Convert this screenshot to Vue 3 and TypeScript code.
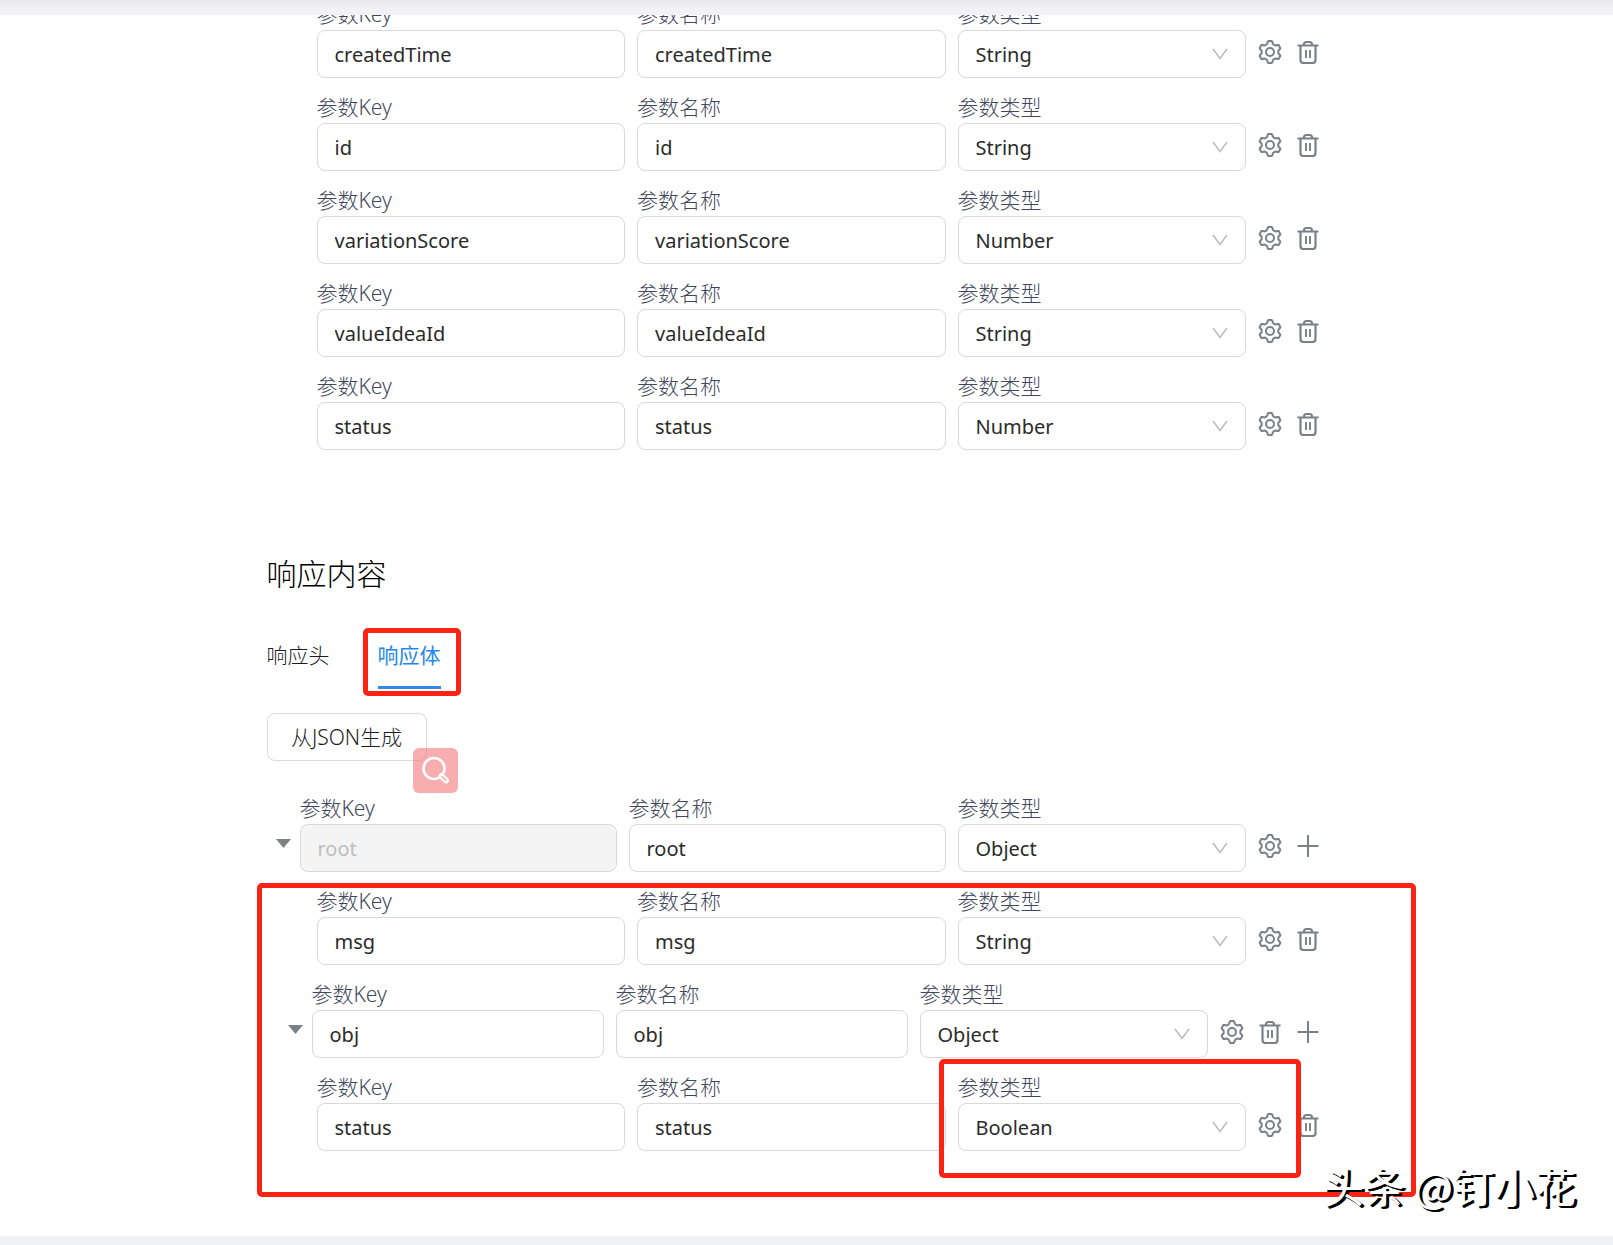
<script setup lang="ts">
import { reactive } from 'vue'

type Level = 'root' | 'branch' | 'leaf'
type Action = 'setting' | 'remove' | 'add'

interface Param {
  id: string
  key: string
  name: string
  type: string
  level: Level
  actions: Action[]
  disabled?: boolean
  marked?: boolean
}

const types = ['String', 'Number', 'Boolean', 'Object', 'Array']

function leaf(id: string, key: string, type: string, marked = false): Param {
  return { id, key, name: key, type, level: 'leaf', actions: ['setting', 'remove'], marked }
}

const groups = reactive({
  request: [
    leaf('req-created', 'createdTime', 'String'),
    leaf('req-id', 'id', 'String'),
    leaf('req-score', 'variationScore', 'Number'),
    leaf('req-idea', 'valueIdeaId', 'String'),
    leaf('req-status', 'status', 'Number'),
  ] as Param[],
  root: [
    { id: 'res-root', key: 'root', name: 'root', type: 'Object', level: 'root', actions: ['setting', 'add'], disabled: true },
  ] as Param[],
  children: [
    leaf('res-msg', 'msg', 'String'),
    { id: 'res-obj', key: 'obj', name: 'obj', type: 'Object', level: 'branch', actions: ['setting', 'remove', 'add'] },
    leaf('res-status', 'status', 'Boolean', true),
  ] as Param[],
})

const blocks: { id: 'request' | 'root' | 'children' }[] = [{ id: 'request' }, { id: 'root' }, { id: 'children' }]

const actionLabels: Record<Action, string> = { setting: '设置', remove: '删除', add: '添加' }

// Six-toothed cog outline, centred in a 24 unit box.
function cogPath(): string {
  const at = (r: number, deg: number) => {
    const a = (deg * Math.PI) / 180
    return `${(12 + r * Math.cos(a)).toFixed(2)} ${(12 + r * Math.sin(a)).toFixed(2)}`
  }
  let d = ''
  for (let k = 0; k < 6; k++) {
    const c = 30 + 60 * k
    d += `${k ? 'L' : 'M'}${at(8.6, c - 20)}L${at(10.4, c - 13)}Q${at(11.4, c - 9)} ${at(11, c - 6)}`
    d += `L${at(11, c + 6)}Q${at(11.4, c + 9)} ${at(10.4, c + 13)}L${at(8.6, c + 20)}Q${at(8, c + 30)} ${at(8.6, c + 40)}`
  }
  return d + 'Z'
}
const cog = cogPath()
</script>

<template>
  <div class="page">
    <header class="topbar"></header>
    <main class="sheet">
      <div class="content">
        <template v-for="block in blocks" :key="block.id">
          <section v-if="block.id === 'root'" class="intro">
            <h2 class="title">响应内容</h2>
            <nav class="tabs">
              <button type="button" class="tab">响应头</button>
              <button type="button" class="tab active">响应体<span class="mark mark-tab"></span></button>
            </nav>
            <div class="tools">
              <button type="button" class="generate">从JSON生成</button>
              <button type="button" class="lens" aria-label="搜索">
                <svg width="29" height="29" viewBox="0 0 29 29" fill="none" stroke="#fff">
                  <circle cx="13" cy="12.5" r="10.5" stroke-width="2.6" />
                  <path d="M20.500 20l4.500 4.500" stroke-width="6" stroke-linecap="round" />
                  <path d="M21 20.500l3.600 3.600" stroke="#f6adae" stroke-width="1.6" stroke-linecap="round" />
                </svg>
              </button>
            </div>
          </section>

          <div class="group">
            <div v-for="p in groups[block.id]" :key="p.id" class="row" :class="p.level">
              <button v-if="p.level !== 'leaf'" type="button" class="toggle" aria-label="展开">
                <svg width="15" height="9" viewBox="0 0 15 9"><path d="M0 0h15L7.500 9z" fill="#7d8186" /></svg>
              </button>
              <div class="fields">
                <div class="field">
                  <label :for="p.id + '-key'">参数Key</label>
                  <input :id="p.id + '-key'" v-model="p.key" type="text" :disabled="p.disabled" />
                </div>
                <div class="field">
                  <label :for="p.id + '-name'">参数名称</label>
                  <input :id="p.id + '-name'" v-model="p.name" type="text" />
                </div>
                <div class="field kind">
                  <label :for="p.id + '-type'">参数类型</label>
                  <select :id="p.id + '-type'" v-model="p.type">
                    <option v-for="t in types" :key="t" :value="t">{{ t }}</option>
                  </select>
                  <svg class="chevron" width="16" height="12" viewBox="0 0 16 12" fill="none" stroke="#b9bbbe" stroke-width="1.5">
                    <path d="M1 1l7 9.500L15 1" />
                  </svg>
                </div>
                <div class="actions">
                  <button v-for="a in p.actions" :key="a" type="button" class="action" :aria-label="actionLabels[a]">
                    <svg v-if="a === 'setting'" width="24" height="24" viewBox="0 0 24 24" fill="none" stroke="currentColor" stroke-width="2" stroke-linejoin="round">
                      <path :d="cog" />
                      <circle cx="12" cy="12" r="4" />
                    </svg>
                    <svg v-else-if="a === 'remove'" width="24" height="24" viewBox="0 0 24 24" fill="none" stroke="currentColor" stroke-width="2.2">
                      <path d="M1.500 5.500h21M4.500 5.500V20a3 3 0 0 0 3 3h9a3 3 0 0 0 3-3V5.500M8 5v-.5A2.500 2.500 0 0 1 10.500 2h3A2.500 2.500 0 0 1 16 4.500V5" />
                      <path d="M10 10v8M14 10v8" stroke-width="1.900" />
                    </svg>
                    <svg v-else width="24" height="24" viewBox="0 0 24 24" fill="none" stroke="currentColor" stroke-width="2">
                      <path d="M12 1v22M1.500 12h21" />
                    </svg>
                  </button>
                </div>
              </div>
              <span v-if="p.marked" class="mark mark-type"></span>
            </div>
            <span v-if="block.id === 'children'" class="mark mark-group"></span>
          </div>
        </template>
      </div>
      <p class="watermark">头条 @钉小花</p>
    </main>
  </div>
</template>

<style>
body {
  margin: 0;
  background: #f0f1f5;
}
</style>

<style scoped>
.page {
  font-family: "Noto Sans", "Noto Sans CJK SC", sans-serif;
  font-size: 21px;
  color: #1c1c1c;
  padding-bottom: 9px;
}
.topbar {
  position: fixed;
  z-index: 5;
  top: 0;
  left: 0;
  right: 0;
  height: 15px;
  background: linear-gradient(#e8e8ec, #f1f1f6 8px);
}
.sheet {
  position: relative;
  background: #fff;
  padding-bottom: 70px;
  overflow: hidden;
}
.content {
  max-width: 1080px;
  margin: 0 auto;
}
.group {
  position: relative;
}
.row {
  position: relative;
  display: flex;
  align-items: flex-end;
  padding-right: 27px;
  margin-bottom: 15px;
}
.row.leaf {
  padding-left: 50px;
}
.row.root {
  padding-left: 9px;
}
.row.branch {
  padding-left: 21px;
}
button {
  font: inherit;
  color: inherit;
  background: none;
  border: 0;
  padding: 0;
  cursor: pointer;
}
.toggle {
  width: 24px;
  height: 48px;
  padding-bottom: 10px;
  display: flex;
  align-items: center;
}
.fields {
  flex: 1;
  min-width: 0;
  display: flex;
  align-items: flex-end;
  gap: 12px;
}
.field {
  flex: 1;
  min-width: 0;
  position: relative;
}
.kind {
  flex: 0 0 288px;
}
label {
  display: block;
  height: 30px;
  line-height: 28px;
  color: #3f485b;
  font-weight: 300;
}
input,
select {
  display: block;
  box-sizing: border-box;
  width: 100%;
  height: 48px;
  margin: 0;
  padding: 0 17px;
  border: 1px solid #d9d9d9;
  border-radius: 8px;
  background: #fff;
  color: #2b2b2b;
  font-family: inherit;
  font-size: 20px;
  line-height: 28px;
  appearance: none;
}
select {
  padding-top: 1px;
}
input:disabled {
  background: #f4f4f4;
  color: #bdbdbd;
}
.chevron {
  position: absolute;
  right: 18px;
  bottom: 18px;
  pointer-events: none;
}
.actions {
  display: flex;
  gap: 14px;
  height: 44px;
  padding-bottom: 4px;
  align-items: center;
}
.action {
  width: 24px;
  height: 24px;
  color: #7b8087;
}
.action svg {
  display: block;
}
.intro {
  padding-top: 89px;
  padding-bottom: 33px;
  font-weight: 300;
}
.title {
  margin: 0;
  font-size: 30px;
  line-height: 40px;
  font-weight: 300;
  color: #000;
}
.tabs {
  display: flex;
  gap: 48px;
  margin-top: 42px;
}
.tab {
  position: relative;
  line-height: 38px;
  padding-bottom: 12px;
  border-bottom: 3px solid transparent;
}
.tab.active {
  color: #1e88ee;
  border-bottom-color: #2b8deb;
  font-weight: 400;
}
.tools {
  position: relative;
  margin-top: 24px;
}
.generate {
  display: block;
  box-sizing: border-box;
  width: 160px;
  height: 48px;
  padding-bottom: 2px;
  border: 1px solid #d9d9d9;
  border-radius: 8px;
}
.lens {
  position: absolute;
  left: 146px;
  top: 35px;
  width: 45px;
  height: 45px;
  border-radius: 6px;
  background: rgba(244, 122, 124, 0.62);
  display: flex;
  align-items: center;
  justify-content: center;
}
.mark {
  position: absolute;
  border: 5px solid #fa2314;
  border-radius: 5px;
  pointer-events: none;
}
.mark-tab {
  inset: -8px -20px -10px -15px;
}
.mark-type {
  left: 672px;
  right: 46px;
  top: -14px;
  bottom: -27px;
}
.mark-group {
  left: -10px;
  right: -69px;
  top: -4px;
  bottom: -46px;
}
.watermark {
  position: absolute;
  right: 37px;
  bottom: 21px;
  margin: 0;
  font-family: "Noto Sans CJK SC", sans-serif;
  font-size: 41px;
  font-weight: 400;
  line-height: 60px;
  color: #fff;
  text-shadow: 2px 2px 0 #000, 3px 2px 0 #000;
  white-space: nowrap;
}
</style>
